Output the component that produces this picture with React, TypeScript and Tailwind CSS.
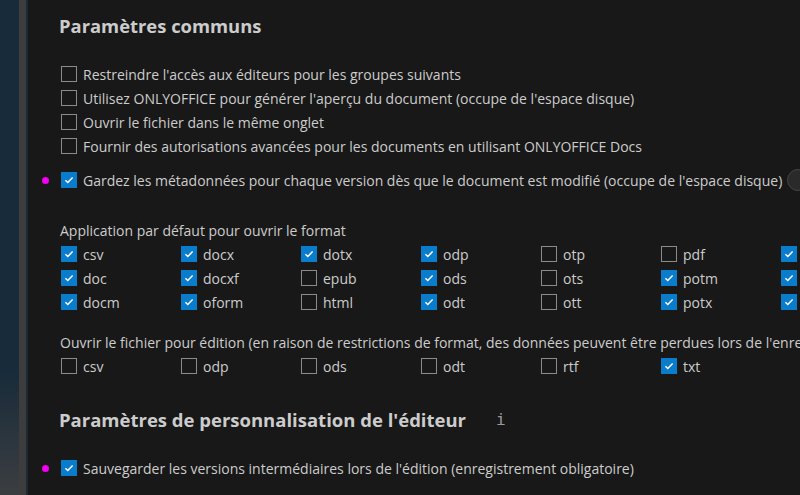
import React from "react";

const Check = ({ checked }: { checked: boolean }) =>
  checked ? (
    <span className="flex h-[16px] w-[16px] shrink-0 items-center justify-center bg-[#0a7ccc]">
      <svg width="12" height="12" viewBox="0 0 16 16">
        <path d="M3.2 8.4 L6.4 11.4 L12.8 4.8" fill="none" stroke="#ffffff" strokeWidth="2" />
      </svg>
    </span>
  ) : (
    <span className="block h-[16px] w-[16px] shrink-0 border border-[#8b8b8b]" />
  );

const Row = ({ label, checked = false, dot = false }: { label: string; checked?: boolean; dot?: boolean }) => (
  <div className="relative flex h-[24px] items-center gap-[6px]">
    {dot && <span className="absolute left-[-19px] top-[9px] h-[7px] w-[7px] rounded-full bg-[#f000f0]" />}
    <Check checked={checked} />
    <span>{label}</span>
  </div>
);

const Cell = ({ label, checked }: { label: string; checked: boolean }) => (
  <div className="flex h-[24px] w-[120px] shrink-0 items-center gap-[6px]">
    <Check checked={checked} />
    <span>{label}</span>
  </div>
);

const formats: [string, boolean][][] = [
  [["csv", true], ["docx", true], ["dotx", true], ["odp", true], ["otp", false], ["pdf", false], ["", true]],
  [["doc", true], ["docxf", true], ["epub", false], ["ods", true], ["ots", false], ["potm", true], ["", true]],
  [["docm", true], ["oform", true], ["html", false], ["odt", true], ["ott", false], ["potx", true], ["", true]],
];

const edit: [string, boolean][] = [
  ["csv", false], ["odp", false], ["ods", false], ["odt", false], ["rtf", false], ["txt", true],
];

export default function App() {
  return (
    <div
      className="flex h-[495px] w-[800px] overflow-hidden bg-[#181818] text-[14px] text-[#cccccc]"
      style={{ fontFamily: '"Segoe UI", "Open Sans", "Noto Sans", sans-serif' }}
    >
      <div className="h-full w-[19px] shrink-0 bg-gradient-to-b from-[#182b3a] via-[#182b3a] via-75% to-[#3b3e41]" />
      <div className="h-full w-[7px] shrink-0 bg-[#3d3d3d]" />
      <div className="h-full w-[2px] shrink-0 bg-[#1b2a35]" />
      <div className="flex min-w-0 flex-1 flex-col overflow-hidden whitespace-nowrap pl-[33px]">
        <h2 className="ml-[-2px] mt-[13px] h-[26px] text-[18.4px] font-bold leading-[26px] text-[#cccccc]">Paramètres communs</h2>
        <div className="mt-[23px] flex flex-col">
          <Row label="Restreindre l'accès aux éditeurs pour les groupes suivants" />
          <Row label="Utilisez ONLYOFFICE pour générer l'aperçu du document (occupe de l'espace disque)" />
          <Row label="Ouvrir le fichier dans le même onglet" />
          <Row label="Fournir des autorisations avancées pour les documents en utilisant ONLYOFFICE Docs" />
        </div>
        <div className="mt-[10px] flex items-center">
          <Row dot checked label="Gardez les métadonnées pour chaque version dès que le document est modifié (occupe de l'espace disque)" />
          <span className="ml-[5px] h-[22px] w-[22px] shrink-0 rounded-full border border-[#444] bg-[#2a2a2a]" />
        </div>
        <div className="ml-[-1px] mt-[26px] flex h-[24px] items-center">Application par défaut pour ouvrir le format</div>
        <div className="flex flex-col">
          {formats.map((r, i) => (
            <div key={i} className="flex">
              {r.map(([l, c], j) => (
                <Cell key={j} label={l} checked={c} />
              ))}
            </div>
          ))}
        </div>
        <div className="ml-[-1px] mt-[16px] flex h-[24px] items-center">
          Ouvrir le fichier pour édition (en raison de restrictions de format, des données peuvent être perdues lors de l'enregistrement)
        </div>
        <div className="flex">
          {edit.map(([l, c], j) => (
            <Cell key={j} label={l} checked={c} />
          ))}
        </div>
        <div className="ml-[-2px] mt-[29px] flex h-[26px] items-center">
          <h2 className="text-[18.5px] font-bold leading-[26px]">Paramètres de personnalisation de l'éditeur</h2>
          <span className="ml-[30px] text-[16px] text-[#9a9a9a]" style={{ fontFamily: '"DejaVu Sans Mono", monospace' }}>i</span>
        </div>
        <div className="mt-[23px]">
          <Row dot checked label="Sauvegarder les versions intermédiaires lors de l'édition (enregistrement obligatoire)" />
        </div>
      </div>
    </div>
  );
}
